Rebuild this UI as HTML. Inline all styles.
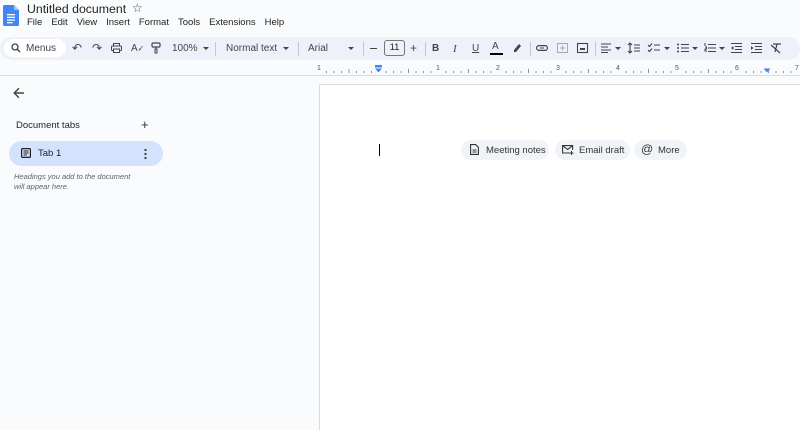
<!DOCTYPE html>
<html><head><meta charset="utf-8"><style>
*{margin:0;padding:0;box-sizing:border-box}
html,body{width:800px;height:430px;overflow:hidden}
body{background:#f9fbfd;font-family:"Liberation Sans",Arial,sans-serif;color:#1f1f1f;position:relative}
.a{position:absolute}
.menu span{margin-right:9px}
.tb{position:absolute;left:0;top:37px;width:800px;height:23px;background:#edf2fa;border-radius:12px}
.ic{position:absolute;top:42px}
.sep{position:absolute;top:42px;width:1px;height:14px;background:#c7c7c7}
.t{position:absolute;top:43px;font-size:10px;color:#444}
.dd{position:absolute;top:47px;width:0;height:0;border-left:3px solid transparent;border-right:3px solid transparent;border-top:3px solid #444}
svg{overflow:visible}
</style></head><body>
<svg class="a" style="left:3px;top:5px" width="16" height="21" viewBox="0 0 16 21"><path d="M0 1.5A1.5 1.5 0 0 1 1.5 0H11l5 5v14.5A1.5 1.5 0 0 1 14.5 21h-13A1.5 1.5 0 0 1 0 19.5z" fill="#4285f4"/><path d="M11 0v5h5z" fill="#a1c2fa"/><rect x="4" y="9" width="8" height="1.3" fill="#fff"/><rect x="4" y="11.7" width="8" height="1.3" fill="#fff"/><rect x="4" y="14.4" width="8" height="1.3" fill="#fff"/><rect x="4" y="17" width="5.5" height="1.3" fill="#fff"/></svg>
<div class="a" style="left:27px;top:2px;font-size:12.3px;color:#1f1f1f">Untitled document</div>
<div class="a" style="left:132px;top:1px;font-size:12px;color:#444">☆</div>
<div class="a menu" style="left:27px;top:17px;font-size:9.5px;color:#1f1f1f"><span>File</span><span>Edit</span><span>View</span><span>Insert</span><span>Format</span><span>Tools</span><span>Extensions</span><span>Help</span></div>
<div class="tb"></div>
<div class="a" style="left:4px;top:39px;width:62px;height:18px;background:#fff;border-radius:9px"></div>
<svg class="a" style="left:11px;top:43px" width="10" height="10"><circle cx="4" cy="4" r="3" fill="none" stroke="#444" stroke-width="1.3"/><path d="M6.2 6.2 9 9" stroke="#444" stroke-width="1.4"/></svg>
<div class="t" style="left:26px">Menus</div>
<div class="t" style="left:72px;font-size:12px;top:41px">↶</div>
<div class="t" style="left:92px;font-size:12px;top:41px">↷</div>
<svg class="ic" style="left:111px;top:43px" width="11" height="10"><rect x="2.5" y="0.5" width="6" height="2.5" fill="none" stroke="#444"/><rect x="0.5" y="3" width="10" height="4.5" rx="1" fill="none" stroke="#444"/><rect x="2.5" y="6" width="6" height="3.5" fill="#edf2fa" stroke="#444"/></svg>
<div class="t" style="left:131px;font-size:10px">A<span style="font-size:8px">✓</span></div>
<svg class="ic" style="left:151px;top:42px" width="10" height="12"><rect x="1" y="1" width="8" height="4" rx="1" fill="none" stroke="#444" stroke-width="1.2"/><path d="M5 5v2M5 7h-1v4h2v-4z" stroke="#444" fill="none"/></svg>
<div class="t" style="left:172px">100%</div><div class="dd" style="left:203px"></div>
<div class="sep" style="left:215px"></div>
<div class="t" style="left:226px">Normal text</div><div class="dd" style="left:283px"></div>
<div class="sep" style="left:298px"></div>
<div class="t" style="left:308px">Arial</div><div class="dd" style="left:348px"></div>
<div class="sep" style="left:363px"></div>
<div class="a" style="left:370px;top:48px;width:7px;height:1.2px;background:#444"></div>
<div class="a" style="left:384px;top:40px;width:21px;height:16px;border:1px solid #747775;border-radius:3px;font-size:9.5px;text-align:center;line-height:14px">11</div>
<div class="t" style="left:410px;font-size:12px;top:41px">+</div>
<div class="sep" style="left:425px"></div>
<div class="t" style="left:432px;font-weight:bold">B</div>
<div class="t" style="left:453px;font-style:italic;font-family:'Liberation Serif',serif;font-size:11px">I</div>
<div class="t" style="left:472px;text-decoration:underline">U</div>
<div class="t" style="left:492px;top:41px">A</div><div class="a" style="left:490px;top:53px;width:13px;height:2px;background:#000"></div>
<svg class="ic" style="left:512px;top:42px" width="10" height="10"><path d="M2 8 7 2l2 2-5 6H2z" fill="#444"/></svg>
<div class="sep" style="left:530px"></div>
<svg class="ic" style="left:536px;top:45px" width="12" height="6"><rect x="0.6" y="0.6" width="10.8" height="4.8" rx="2.4" fill="none" stroke="#444" stroke-width="1.2"/><rect x="4" y="2" width="4" height="2" fill="#edf2fa"/><path d="M4 3h4" stroke="#444"/></svg>
<svg class="ic" style="left:557px;top:43px" width="11" height="10"><rect x="0.5" y="0.5" width="10" height="9" fill="none" stroke="#aaa"/><path d="M5.5 2.5v5M3 5h5" stroke="#aaa"/></svg>
<svg class="ic" style="left:577px;top:43px" width="11" height="10"><rect x="0.5" y="0.5" width="10" height="9" fill="none" stroke="#444" stroke-width="1.1"/><rect x="3" y="5" width="5" height="2" fill="#444"/></svg>
<div class="sep" style="left:595px"></div>
<svg class="ic" style="left:601px;top:43px" width="10" height="10"><path d="M0 1h10M0 4h7M0 7h10M0 9.5h7" stroke="#444" stroke-width="1.1"/></svg><div class="dd" style="left:615px"></div>
<svg class="ic" style="left:628px;top:43px" width="12" height="10"><path d="M2 0v10M0 2l2-2 2 2M0 8l2 2 2-2M6 2h6M6 5h6M6 8h6" stroke="#444" fill="none" stroke-width="1.1"/></svg>
<svg class="ic" style="left:648px;top:43px" width="12" height="10"><path d="M0 2l1.5 1.5L4 0.5M0 7l1.5 1.5L4 5.5M6 2h6M6 7h6" stroke="#444" fill="none" stroke-width="1.1"/></svg><div class="dd" style="left:664px"></div>
<svg class="ic" style="left:677px;top:43px" width="12" height="10"><circle cx="1" cy="1.5" r="1" fill="#444"/><circle cx="1" cy="5" r="1" fill="#444"/><circle cx="1" cy="8.5" r="1" fill="#444"/><path d="M4 1.5h8M4 5h8M4 8.5h8" stroke="#444" stroke-width="1.1"/></svg><div class="dd" style="left:692px"></div>
<svg class="ic" style="left:704px;top:43px" width="12" height="10"><path d="M1 0v3M1 4h1.5v2H1v2h2M4 1.5h8M4 5h8M4 8.5h8" stroke="#444" fill="none" stroke-width="1"/></svg><div class="dd" style="left:719px"></div>
<svg class="ic" style="left:731px;top:43px" width="11" height="10"><path d="M0 0.5h11M4 3.5h7M4 6.5h7M0 9.5h11" stroke="#444" stroke-width="1.1"/><path d="M2.5 3v4L0 5z" fill="#444"/></svg>
<svg class="ic" style="left:751px;top:43px" width="11" height="10"><path d="M0 0.5h11M4 3.5h7M4 6.5h7M0 9.5h11" stroke="#444" stroke-width="1.1"/><path d="M0 3v4l2.5-2z" fill="#444"/></svg>
<svg class="ic" style="left:771px;top:43px" width="11" height="10"><path d="M2 1h8M6 1 4 9M0 2l9 8" stroke="#444" stroke-width="1.2" fill="none"/></svg>
<svg class="a" style="left:0;top:62px" width="800" height="14">
<g stroke="#777" stroke-width="0.8">
<path d="M326.5 9v2M334 9v2M341.5 9v2M349 7v4M356.5 9v2M364 9v2M371.5 9v2"/>
<path d="M386 9v2M393.5 9v2M401 9v2M408.5 7v4M416 9v2M423.5 9v2M431 9v2M446 9v2M453.5 9v2M461 9v2M468.5 7v4M476 9v2M483.5 9v2M491 9v2M506 9v2M513.5 9v2M521 9v2M528.5 7v4M536 9v2M543.5 9v2M551 9v2M566 9v2M573.5 9v2M581 9v2M588.5 7v4M596 9v2M603.5 9v2M611 9v2M626 9v2M633.5 9v2M641 9v2M648.5 7v4M656 9v2M663.5 9v2M671 9v2M686 9v2M693.5 9v2M701 9v2M708.5 7v4M716 9v2M723.5 9v2M731 9v2M746 9v2M753.5 9v2M761 9v2M768.5 7v4M776 9v2M783.5 9v2M791 9v2"/>
</g>
<g font-size="7" fill="#555" text-anchor="middle" font-family="Liberation Sans"><text x="319" y="8">1</text><text x="438" y="8">1</text><text x="498" y="8">2</text><text x="558" y="8">3</text><text x="618" y="8">4</text><text x="677" y="8">5</text><text x="737" y="8">6</text><text x="797" y="8">7</text></g>
<rect x="375" y="3" width="7" height="2.5" fill="#4285f4"/><path d="M375 6.5h7l-3.5 4z" fill="#4285f4"/>
<path d="M763.5 6.5h7l-3.5 4z" fill="#4285f4"/>
</svg>
<div class="a" style="left:0;top:75px;width:800px;height:1px;background:#dadce0"></div>
<svg class="a" style="left:13px;top:87px" width="12" height="12"><path d="M11 6H1.5M6 1.2 1.2 6 6 10.8" stroke="#444" stroke-width="1.4" fill="none"/></svg>
<div class="a" style="left:16px;top:120px;font-size:9.5px;color:#1f1f1f">Document tabs</div>
<div class="a" style="left:141px;top:117px;font-size:13px;color:#333">+</div>
<div class="a" style="left:9px;top:141px;width:154px;height:25px;background:#d3e3fd;border-radius:13px"></div>
<svg class="a" style="left:21px;top:148px" width="10" height="10"><rect x="0.6" y="0.6" width="8.8" height="8.8" rx="1" fill="none" stroke="#1f1f1f" stroke-width="1.2"/><path d="M2.5 3h5M2.5 5h5M2.5 7h3.5" stroke="#1f1f1f"/></svg>
<div class="a" style="left:38px;top:148px;font-size:9.5px">Tab 1</div>
<div class="a" style="left:144px;top:148px;width:3px;height:12px;background:radial-gradient(circle,#444 1.1px,transparent 1.3px) 0 0/3px 4px"></div>
<div class="a" style="left:14px;top:172px;font-size:7.5px;font-style:italic;color:#5f6368;line-height:10px">Headings you add to the document<br>will appear here.</div>
<div class="a" style="left:319px;top:84px;width:490px;height:360px;background:#fff;border:1px solid #dadce0"></div>
<div class="a" style="left:379px;top:144px;width:1px;height:12px;background:#000"></div>
<div class="a" style="left:461px;top:140px;width:88px;height:20px;background:#f0f4f9;border-radius:10px"></div>
<svg class="a" style="left:470px;top:144px" width="9" height="11"><path d="M0.6 0.6h5l2.8 2.8v7H0.6z" fill="none" stroke="#333" stroke-width="1.1"/><path d="M2.5 6h4M2.5 8h4" stroke="#333"/></svg>
<div class="a" style="left:486px;top:145px;font-size:9.5px;color:#333">Meeting notes</div>
<div class="a" style="left:555px;top:140px;width:75px;height:20px;background:#f0f4f9;border-radius:10px"></div>
<svg class="a" style="left:562px;top:145px" width="12" height="10"><path d="M9 8H0.6V0.6h10V5M0.6 0.6l5 4 5-4" fill="none" stroke="#333" stroke-width="1.1"/><path d="M9.5 6v4M7.5 8h4" stroke="#333"/></svg>
<div class="a" style="left:579px;top:145px;font-size:9.5px;color:#333">Email draft</div>
<div class="a" style="left:634px;top:140px;width:53px;height:20px;background:#f0f4f9;border-radius:10px"></div>
<div class="a" style="left:641px;top:142px;font-size:12px;color:#333">@</div>
<div class="a" style="left:658px;top:145px;font-size:9.5px;color:#333">More</div>
</body></html>
